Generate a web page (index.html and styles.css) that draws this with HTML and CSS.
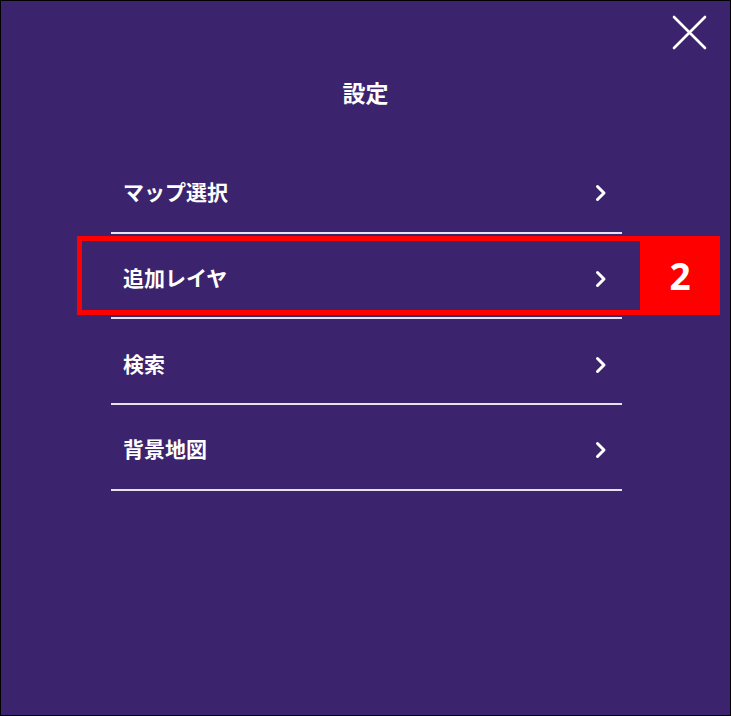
FILE: index.html
```html
<!DOCTYPE html>
<html lang="ja">
<head>
<meta charset="utf-8">
<link rel="stylesheet" href="styles.css">
</head>
<body>
<div class="panel">
  <button class="close" aria-label="閉じる">
    <svg width="35" height="35" viewBox="0 0 35 35"><path d="M2 2 L33 33 M33 2 L2 33" stroke="#fff" stroke-width="2.6" stroke-linecap="round" fill="none"/></svg>
  </button>
  <h1 class="title">設定</h1>
  <ul class="menu">
    <li class="item"><span>マップ選択</span><svg class="chev" width="12" height="18" viewBox="0 0 12 18"><polyline points="2.5,2.5 9,9 2.5,15.5" stroke="#fff" stroke-width="3" fill="none" stroke-linecap="round" stroke-linejoin="round"/></svg></li>
    <li class="item"><span>追加レイヤ</span><svg class="chev" width="12" height="18" viewBox="0 0 12 18"><polyline points="2.5,2.5 9,9 2.5,15.5" stroke="#fff" stroke-width="3" fill="none" stroke-linecap="round" stroke-linejoin="round"/></svg></li>
    <li class="item"><span>検索</span><svg class="chev" width="12" height="18" viewBox="0 0 12 18"><polyline points="2.5,2.5 9,9 2.5,15.5" stroke="#fff" stroke-width="3" fill="none" stroke-linecap="round" stroke-linejoin="round"/></svg></li>
    <li class="item"><span>背景地図</span><svg class="chev" width="12" height="18" viewBox="0 0 12 18"><polyline points="2.5,2.5 9,9 2.5,15.5" stroke="#fff" stroke-width="3" fill="none" stroke-linecap="round" stroke-linejoin="round"/></svg></li>
  </ul>
  <div class="highlight"></div>
  <div class="badge">2</div>
</div>
</body>
</html>
```
FILE: styles.css
```css
* { box-sizing: border-box; }
html, body { margin: 0; padding: 0; }
body {
  width: 731px;
  height: 716px;
  font-family: "Noto Sans CJK JP", "Noto Sans", sans-serif;
  background: #000;
}
.panel {
  position: relative;
  width: 731px;
  height: 716px;
  border: 1px solid #000;
  background: #3b246d;
  padding: 76px 0 0 0;
  color: #fff;
}
.close {
  position: absolute;
  top: 14px;
  right: 23px;
  width: 35px;
  height: 35px;
  padding: 0;
  border: 0;
  background: none;
  display: block;
}
.close svg { display: block; }
.title {
  margin: 0 0 41px 0;
  text-align: center;
  font-size: 23px;
  line-height: 30px;
  font-weight: 700;
}
.menu {
  list-style: none;
  margin: 0 0 0 110px;
  padding: 0;
  width: 511px;
}
.item {
  height: 85.67px;
  border-bottom: 2px solid #e6e1ef;
  display: flex;
  align-items: center;
  justify-content: space-between;
  padding: 3px 15px 0 12px;
  font-size: 21px;
  font-weight: 700;
  line-height: 30px;
}
.chev { display: block; margin-top: 4px; }
.highlight {
  position: absolute;
  left: 76px;
  top: 235px;
  width: 568px;
  height: 79px;
  border: 5px solid #ff0000;
}
.badge {
  position: absolute;
  left: 639px;
  top: 235px;
  width: 80px;
  height: 79px;
  background: #ff0000;
  color: #fff;
  display: flex;
  align-items: center;
  justify-content: center;
  font-family: "Open Sans", "Noto Sans", sans-serif;
  font-weight: 700;
  font-size: 37px;
  line-height: 1;
}
```
